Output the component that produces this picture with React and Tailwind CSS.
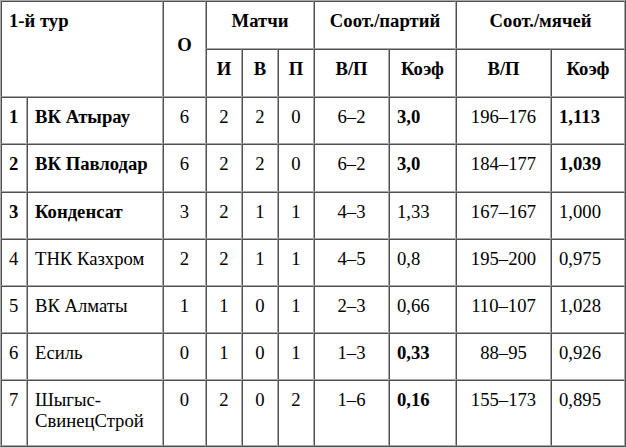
import React from "react";

const rows = [
  { n: "1", name: "ВК Атырау", b: true, o: "6", i: "2", v: "2", p: "0", vp: "6–2", k: "3,0", kb: true, m: "196–176", mk: "1,113", mkb: true, pb: "pb-[16px]" },
  { n: "2", name: "ВК Павлодар", b: true, o: "6", i: "2", v: "2", p: "0", vp: "6–2", k: "3,0", kb: true, m: "184–177", mk: "1,039", mkb: true, pb: "pb-[17px]" },
  { n: "3", name: "Конденсат", b: true, o: "3", i: "2", v: "1", p: "1", vp: "4–3", k: "1,33", kb: false, m: "167–167", mk: "1,000", mkb: false, pb: "pb-[16px]" },
  { n: "4", name: "ТНК Казхром", b: false, o: "2", i: "2", v: "1", p: "1", vp: "4–5", k: "0,8", kb: false, m: "195–200", mk: "0,975", mkb: false, pb: "pb-[16px]" },
  { n: "5", name: "ВК Алматы", b: false, o: "1", i: "1", v: "0", p: "1", vp: "2–3", k: "0,66", kb: false, m: "110–107", mk: "1,028", mkb: false, pb: "pb-[16px]" },
  { n: "6", name: "Есиль", b: false, o: "0", i: "1", v: "0", p: "1", vp: "1–3", k: "0,33", kb: true, m: "88–95", mk: "0,926", mkb: false, pb: "pb-[16px]" },
  { n: "7", name: "Шыгыс-СвинецСтрой", b: false, o: "0", i: "2", v: "0", p: "2", vp: "1–6", k: "0,16", kb: true, m: "155–173", mk: "0,895", mkb: false, pb: "pb-[14px]" },
];

const cell =
  "border border-t-[#505050] border-l-[#505050] border-b-[#a8a8a8] border-r-[#a8a8a8] align-top pt-[8px] px-[7px] leading-[21px] font-['Liberation_Serif',serif]";

export default function App() {
  return (
    <div className="bg-white w-[626px] h-[447px] overflow-hidden font-['Liberation_Serif',serif]">
      <table className="table-fixed w-[626px] border-separate border-spacing-0 border border-t-[#a8a8a8] border-l-[#a8a8a8] border-b-[#505050] border-r-[#505050] font-['Liberation_Serif',serif] text-[18.67px] text-black">
        <colgroup>
          <col className="w-[26px]" />
          <col className="w-[136px]" />
          <col className="w-[43px]" />
          <col className="w-[36px]" />
          <col className="w-[36px]" />
          <col className="w-[36px]" />
          <col className="w-[75px]" />
          <col className="w-[67px]" />
          <col className="w-[95px]" />
          <col className="w-[74px]" />
        </colgroup>
        <thead>
          <tr>
            <th colSpan={2} rowSpan={2} className={`${cell} pb-[17px] text-left font-bold`}>1-й тур</th>
            <th rowSpan={2} className={`${cell} pb-[17px] text-center font-bold !align-middle`}>О</th>
            <th colSpan={3} className={`${cell} pb-[17px] text-center font-bold`}>Матчи</th>
            <th colSpan={2} className={`${cell} pb-[17px] text-center font-bold`}>Соот./партий</th>
            <th colSpan={2} className={`${cell} pb-[17px] text-center font-bold`}>Соот./мячей</th>
          </tr>
          <tr>
            <th className={`${cell} pb-[17px] text-center font-bold`}>И</th>
            <th className={`${cell} pb-[17px] text-center font-bold`}>В</th>
            <th className={`${cell} pb-[17px] text-center font-bold`}>П</th>
            <th className={`${cell} pb-[17px] text-center font-bold`}>В/П</th>
            <th className={`${cell} pb-[17px] text-center font-bold`}>Коэф</th>
            <th className={`${cell} pb-[17px] text-center font-bold`}>В/П</th>
            <th className={`${cell} pb-[17px] text-center font-bold`}>Коэф</th>
          </tr>
        </thead>
        <tbody>
          {rows.map((r) => (
            <tr key={r.n}>
              <td className={`${cell} ${r.pb} text-left ${r.b ? "font-bold" : "font-normal"}`}>{r.n}</td>
              <td className={`${cell} ${r.pb} text-left ${r.b ? "font-bold" : "font-normal"}`}>{r.name}</td>
              <td className={`${cell} ${r.pb} text-center`}>{r.o}</td>
              <td className={`${cell} ${r.pb} text-center`}>{r.i}</td>
              <td className={`${cell} ${r.pb} text-center`}>{r.v}</td>
              <td className={`${cell} ${r.pb} text-center`}>{r.p}</td>
              <td className={`${cell} ${r.pb} text-center`}>{r.vp}</td>
              <td className={`${cell} ${r.pb} text-left ${r.kb ? "font-bold" : "font-normal"}`}>{r.k}</td>
              <td className={`${cell} ${r.pb} text-center`}>{r.m}</td>
              <td className={`${cell} ${r.pb} text-left ${r.mkb ? "font-bold" : "font-normal"}`}>{r.mk}</td>
            </tr>
          ))}
        </tbody>
      </table>
    </div>
  );
}
